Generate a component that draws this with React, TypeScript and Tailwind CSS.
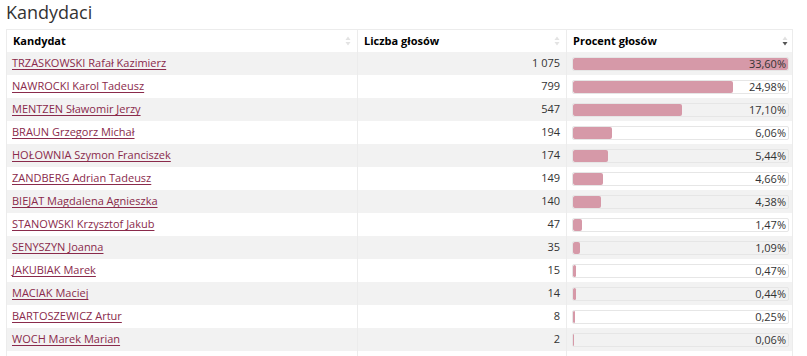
import React from "react";

const rows: [string, string, number][] = [
  ["TRZASKOWSKI Rafał Kazimierz", "1 075", 33.6],
  ["NAWROCKI Karol Tadeusz", "799", 24.98],
  ["MENTZEN Sławomir Jerzy", "547", 17.1],
  ["BRAUN Grzegorz Michał", "194", 6.06],
  ["HOŁOWNIA Szymon Franciszek", "174", 5.44],
  ["ZANDBERG Adrian Tadeusz", "149", 4.66],
  ["BIEJAT Magdalena Agnieszka", "140", 4.38],
  ["STANOWSKI Krzysztof Jakub", "47", 1.47],
  ["SENYSZYN Joanna", "35", 1.09],
  ["JAKUBIAK Marek", "15", 0.47],
  ["MACIAK Maciej", "14", 0.44],
  ["BARTOSZEWICZ Artur", "8", 0.25],
  ["WOCH Marek Marian", "2", 0.06],
];

const fmt = (n: number) => n.toFixed(2).replace(".", ",") + "%";

function SortIcon({ active }: { active?: boolean }) {
  return (
    <svg width="6" height="10" viewBox="0 0 6 10" className="shrink-0">
      <path d="M3 0.5 L5.5 4 L0.5 4 Z" fill={active ? "#e0e0e0" : "#e3e3e3"} />
      <path d="M3 9.5 L5.5 6 L0.5 6 Z" fill={active ? "#555" : "#e3e3e3"} />
    </svg>
  );
}

export default function App() {
  const max = 33.6;
  return (
    <div
      className="w-[807px] h-[356px] overflow-hidden bg-white text-[#333]"
      style={{ fontFamily: '"Open Sans", sans-serif' }}
    >
      <h2 className="pl-[6px] pt-[1px] h-[29px] text-[18px] leading-[22px] font-normal text-[#333]">Kandydaci</h2>
      <div className="ml-[6px] w-[787px] border-l border-r border-t border-[#ececec]">
        <div className="grid grid-cols-[351px_209px_227px] h-[22px] text-[11px] font-bold text-black">
          <div className="flex items-center justify-between pl-[6px] pr-[6px] border-r border-[#ececec]">
            <span>Kandydat</span>
            <SortIcon />
          </div>
          <div className="flex items-center justify-between pl-[6px] pr-[6px] border-r border-[#ececec]">
            <span>Liczba głosów</span>
            <SortIcon />
          </div>
          <div className="flex items-center justify-between pl-[6px] pr-[6px]">
            <span>Procent głosów</span>
            <SortIcon active />
          </div>
        </div>
        {rows.map(([name, votes, pct], i) => (
          <div
            key={name}
            className={`grid grid-cols-[351px_209px_227px] h-[23px] text-[11px] ${i % 2 === 0 ? "bg-[#f2f2f2]" : "bg-white"}`}
          >
            <div className="flex items-center pl-[5px] border-r border-[#ececec]">
              <a href="#" className="text-[#8a2a4b] underline underline-offset-[2px] decoration-[#8a2a4b]">
                {name}
              </a>
            </div>
            <div className="flex items-center justify-end pr-[6px] border-r border-[#ececec]">
              {votes}
            </div>
            <div className="flex items-center px-[5px]">
              <div className="relative h-[14px] w-full rounded-[2px] border border-[#e6e6e6] overflow-hidden">
                <div
                  className="h-full bg-[#d699a8] rounded-[2px]"
                  style={{ width: `${(pct / max) * 100}%` }}
                />
                <span className="absolute right-[2px] top-0 h-full flex items-center leading-none">
                  {fmt(pct)}
                </span>
              </div>
            </div>
          </div>
        ))}
        <div className="grid grid-cols-[351px_209px_227px] h-[23px]">
          <div className="border-r border-[#ececec]" />
          <div className="border-r border-[#ececec]" />
          <div />
        </div>
      </div>
    </div>
  );
}
